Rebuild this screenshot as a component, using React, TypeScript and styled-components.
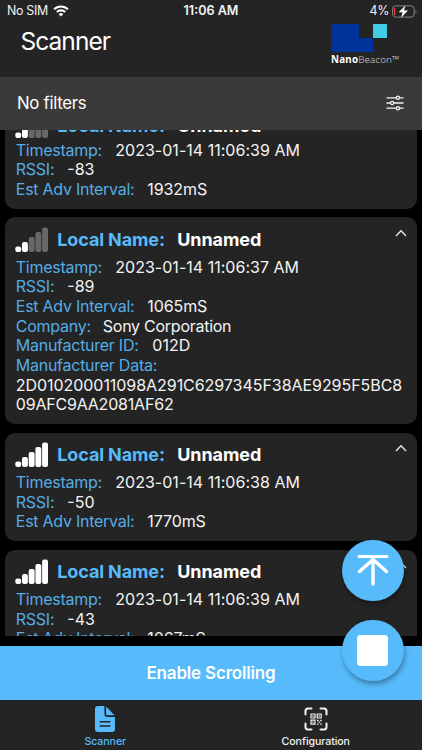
import React from "react";
import styled, { createGlobalStyle } from "styled-components";

const blue = "#57bbfb";
const panel = "#242424";

const GlobalStyle = createGlobalStyle`
  * { box-sizing: border-box; }
  body { margin: 0; background: #000; overflow: hidden; }
`;

const Screen = styled.div`
  position: relative;
  display: flex;
  flex-direction: column;
  width: 422px;
  height: 750px;
  overflow: hidden;
  background: #000;
  color: #fff;
  font-family: Inter, sans-serif;
`;

const StatusBar = styled.div`
  flex: none;
  display: grid;
  grid-template-columns: 1fr auto 1fr;
  align-items: center;
  height: 22px;
  padding: 0 5px 0 7px;
  background: ${panel};
  font-size: 12.4px;
  line-height: 22px;
  letter-spacing: -0.3px;
  color: #f2f2f2;
`;

const StatusSide = styled.div<{ $end?: boolean }>`
  display: flex;
  align-items: center;
  justify-content: ${(p) => (p.$end ? "flex-end" : "flex-start")};
  gap: ${(p) => (p.$end ? 3 : 5.5)}px;
`;

const Clock = styled.span`
  padding-right: 2px;
  font-size: 12.6px;
  font-weight: 600;
  letter-spacing: 0;
`;

const Header = styled.header`
  flex: none;
  display: flex;
  justify-content: space-between;
  height: 54.5px;
  padding: 0 21px 0 20.5px;
  background: ${panel};
`;

const Title = styled.h1`
  margin: 0;
  font-size: 24.5px;
  line-height: 38px;
  font-weight: 400;
  letter-spacing: -0.95px;
`;

const Brand = styled.div`
  width: 70px;
  padding-top: 2px;
`;

const BrandMark = styled.svg`
  display: block;
`;

const BrandName = styled.div`
  margin-top: 1px;
  font-family: "Noto Sans", sans-serif;
  font-size: 9.8px;
  line-height: 13px;
  font-weight: 300;
  letter-spacing: 0.08px;
  white-space: nowrap;
  color: #cfcfcf;
  b { font-weight: 700; color: #fff; letter-spacing: 0.25px; }
`;

const FilterBar = styled.div`
  flex: none;
  display: flex;
  align-items: center;
  justify-content: space-between;
  height: 53.5px;
  padding: 0 18px 0 17px;
  background: #3a3a3a;
  font-size: 16.8px;
  letter-spacing: -0.3px;
`;

const List = styled.main`
  flex: none;
  height: 506px;
  overflow: hidden;
`;

const Cards = styled.div`
  display: flex;
  flex-direction: column;
  gap: 8.5px;
  margin-top: -26.6px;
  padding: 0 5.3px;
`;

const Card = styled.article`
  flex: none;
  padding: 9.5px 10.5px 9.5px;
  border-radius: 10px;
  background: ${panel};
`;

const CardHead = styled.div<{ $tight?: boolean }>`
  display: flex;
  height: ${(p) => (p.$tight ? 27.6 : 30.6)}px;
`;

const Bars = styled.svg`
  flex: none;
  margin: 0 8.1px 0 -0.6px;
`;

const Name = styled.div`
  display: flex;
  flex: 1;
  gap: 13.5px;
  font-size: 18px;
  line-height: 26px;
  font-weight: 700;
`;

const NameLabel = styled.span`
  width: 106.5px;
  color: ${blue};
  letter-spacing: -0.13px;
  white-space: nowrap;
`;

const NameValue = styled.span`
  letter-spacing: -0.1px;
`;

const Chevron = styled.svg`
  margin-top: 2px;
  margin-right: -1px;
`;

const Line = styled.div`
  display: flex;
  height: 19.67px;
  font-size: 16px;
  line-height: 19.67px;
  white-space: nowrap;
`;

const Label = styled.span<{ $w: number }>`
  width: ${(p) => p.$w}px;
  letter-spacing: -0.26px;
  color: #55ade4;
`;

const Value = styled.span<{ $track?: number }>`
  letter-spacing: ${(p) => p.$track ?? 0}px;
  color: #f4f4f4;
`;

const Action = styled.button`
  flex: none;
  height: 54px;
  margin-top: 10px;
  border: 0;
  background: ${blue};
  color: #fff;
  font: 600 17px/54px Inter, sans-serif;
  letter-spacing: -0.18px;
  padding: 0;
`;

const Tabs = styled.nav`
  flex: none;
  display: grid;
  grid-template-columns: 1fr 1fr;
  height: 50px;
  padding-right: 1px;
  background: ${panel};
`;

const Tab = styled.div<{ $active?: boolean }>`
  display: flex;
  flex-direction: column;
  align-items: center;
  padding-top: 6px;
  font-size: 10.6px;
  line-height: 14px;
  font-weight: 500;
  letter-spacing: -0.08px;
  color: ${(p) => (p.$active ? blue : "#f2f2f2")};
  svg { height: 26px; margin-bottom: 3px; }
`;

const FloatingButtons = styled.div`
  position: absolute;
  left: 342px;
  top: 539.6px;
  display: flex;
  flex-direction: column;
  gap: 18.8px;
`;

const RoundButton = styled.button`
  display: grid;
  place-items: center;
  width: 61.5px;
  height: 61.5px;
  padding: 0;
  border: 0;
  border-radius: 50%;
  background: ${blue};
  box-shadow: 1px 3px 5px rgba(0, 0, 0, 0.35);
`;

type Row = { label: string; w: number; value?: string; track?: number };
type Device = { bars: number; tight?: boolean; rows: Row[] };

const basics = (time: string, rssi: string, interval: string): Row[] => [
  { label: "Timestamp:", w: 99.5, value: `2023-01-14 ${time}`, track: 0.02 },
  { label: "RSSI:", w: 51.5, value: rssi },
  { label: "Est Adv Interval:", w: 131.5, value: interval, track: -0.1 },
];

const devices: Device[] = [
  { bars: 2, tight: true, rows: basics("11:06:39 AM", "-83", "1932mS") },
  {
    bars: 2,
    rows: [
      ...basics("11:06:37 AM", "-89", "1065mS"),
      { label: "Company:", w: 87, value: "Sony Corporation", track: -0.26 },
      { label: "Manufacturer ID:", w: 136.5, value: "012D" },
      { label: "Manufacturer Data:", w: 150 },
      { label: "", w: 0, value: "2D010200011098A291C6297345F38AE9295F5BC8", track: -0.05 },
      { label: "", w: 0, value: "09AFC9AA2081AF62", track: -0.2 },
    ],
  },
  { bars: 5, rows: basics("11:06:38 AM", "-50", "1770mS") },
  { bars: 5, rows: basics("11:06:39 AM", "-43", "1067mS") },
];

const barHeights = [5.5, 10, 15, 20, 24.5];

const DeviceCard = ({ device }: { device: Device }) => (
  <Card>
    <CardHead $tight={device.tight}>
      <Bars width="34" height="25" viewBox="0 0 34 25">
        {barHeights.map((h, i) => (
          <rect
            key={h}
            x={0.3 + i * 6.7}
            y={25 - h}
            width="5.9"
            height={h}
            rx="2"
            fill={i < device.bars ? "#fff" : "#686868"}
          />
        ))}
      </Bars>
      <Name>
        <NameLabel>Local Name:</NameLabel>
        <NameValue>Unnamed</NameValue>
      </Name>
      <Chevron width="12" height="8" viewBox="0 0 12 8" fill="none" stroke="#eee" strokeWidth="1.3">
        <path d="M1 7 6 1.8 11 7" />
      </Chevron>
    </CardHead>
    {device.rows.map((r, i) => (
      <Line key={i}>
        {r.label && <Label $w={r.w}>{r.label}</Label>}
        {r.value && <Value $track={r.track}>{r.value}</Value>}
      </Line>
    ))}
  </Card>
);

const App = () => (
  <Screen>
    <GlobalStyle />
    <StatusBar>
      <StatusSide>
        <span>No SIM</span>
        <svg width="16" height="12" viewBox="0 0 16 12" fill="none" stroke="#fff">
          <path d="M1.1 4.3a9.8 9.8 0 0 1 13.8 0" strokeWidth="2.1" />
          <path d="M3.8 7.1a6 6 0 0 1 8.4 0" strokeWidth="2.1" />
          <path d="M8 11.5 5.7 9.2a3.3 3.3 0 0 1 4.6 0Z" fill="#fff" stroke="none" />
        </svg>
      </StatusSide>
      <Clock>11:06 AM</Clock>
      <StatusSide $end>
        <span>4%</span>
        <svg width="25" height="13" viewBox="0 0 25 13" fill="none">
          <rect x=".6" y=".9" width="21.6" height="11.2" rx="3" stroke="#858585" />
          <path d="M23.6 4.7q1.7 1.8 0 3.6Z" fill="#858585" />
          <rect x="2" y="2.8" width="1.2" height="7.4" rx=".6" fill="#f04438" />
          <path d="M13.5.4 6.6 7.2h4L9 12.8l7-7.3h-4Z" fill="#fff" />
        </svg>
      </StatusSide>
    </StatusBar>
    <Header>
      <Title>Scanner</Title>
      <Brand>
        <BrandMark width="56" height="28" viewBox="0 0 56 28">
          <path d="M0 0h28v14h14v14H0Z" fill="#00329b" />
          <path d="M42 0h14v14H42Z" fill="#43cde5" />
        </BrandMark>
        <BrandName>
          <b>Nano</b>Beacon™
        </BrandName>
      </Brand>
    </Header>
    <FilterBar>
      <span>No filters</span>
      <svg width="18" height="16" viewBox="0 0 18 16" fill="none" stroke="#f2f2f2" strokeWidth="1.3">
        <path d="M.5 2.8h9.7m3.4 0h3.9M.5 8h3.9m3.4 0h9.7M.5 13.2h9.7m3.4 0h3.9" />
        <circle cx="11.9" cy="2.8" r="1.6" />
        <circle cx="6.1" cy="8" r="1.6" />
        <circle cx="11.9" cy="13.2" r="1.6" />
      </svg>
    </FilterBar>
    <List>
      <Cards>
        {devices.map((d, i) => (
          <DeviceCard key={i} device={d} />
        ))}
      </Cards>
    </List>
    <Action>Enable Scrolling</Action>
    <Tabs>
      <Tab $active>
        <svg width="20" height="26" viewBox="0 0 20 26">
          <path d="M3 0h6.4v8a3 3 0 0 0 3 3H20v12a3 3 0 0 1-3 3H3a3 3 0 0 1-3-3V3a3 3 0 0 1 3-3Z" fill={blue} />
          <path d="M11.1.4 19.5 9.2h-7.2a1.2 1.2 0 0 1-1.2-1.2Z" fill={blue} />
          <path d="M5.2 15.7h9.7M5.2 20h9.7" stroke={panel} strokeWidth="1.5" strokeLinecap="round" />
        </svg>
        Scanner
      </Tab>
      <Tab>
        <svg width="24" height="26" viewBox="0 0 24 26" fill="none" stroke="#f2f2f2">
          <path d="M1.5 8.5V5q0-2.5 2.5-2.5h3.5M16.5 2.5H20q2.5 0 2.5 2.5v3.5M22.5 17.5V21q0 2.5-2.5 2.5h-3.5M7.5 23.5H4q-2.5 0-2.5-2.5v-3.5" strokeWidth="2" strokeLinecap="round" />
          <path d="M7 8h4v4H7ZM13.2 8h4v4h-4ZM7 14.2h4v4H7Z" strokeWidth="1.2" />
          <path d="M8.4 10h1.2M14.6 10h1.2M8.4 16.2h1.2M13 14.5h1.6M16.2 14.5h1.5M14.6 16.2h1.6M13 18.2h1.6M16.2 18.2h1.5" strokeWidth="1.3" />
        </svg>
        Configuration
      </Tab>
    </Tabs>
    <FloatingButtons>
      <RoundButton>
        <svg width="32" height="32" viewBox="0 0 32 32" fill="none" stroke="#fff" strokeLinecap="round" strokeLinejoin="round">
          <path d="M2 2.5h28" strokeWidth="2.8" />
          <path d="M16 30V5M2.5 17.5 16 5.5l13.5 12" strokeWidth="3.4" />
        </svg>
      </RoundButton>
      <RoundButton>
        <svg width="31" height="31" viewBox="0 0 31 31">
          <rect width="31" height="31" rx="3.5" fill="#fff" />
        </svg>
      </RoundButton>
    </FloatingButtons>
  </Screen>
);

export default App;
